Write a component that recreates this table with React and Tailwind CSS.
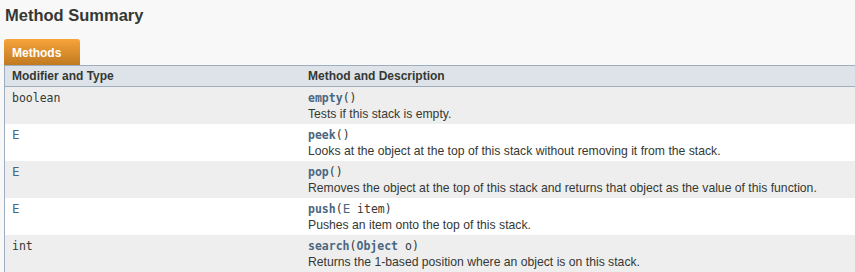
export default function App() {
  const mono = { fontFamily: '"DejaVu Sans Mono", "Liberation Mono", monospace' };
  const rows = [
    { type: "boolean", link: false, name: "empty", args: [], desc: "Tests if this stack is empty.", bg: "bg-[#eeeeee]" },
    { type: "E", link: true, name: "peek", args: [], desc: "Looks at the object at the top of this stack without removing it from the stack.", bg: "bg-white" },
    { type: "E", link: true, name: "pop", args: [], desc: "Removes the object at the top of this stack and returns that object as the value of this function.", bg: "bg-[#eeeeee]" },
    { type: "E", link: true, name: "push", args: "push", desc: "Pushes an item onto the top of this stack.", bg: "bg-white" },
    { type: "int", link: false, name: "search", args: "search", desc: "Returns the 1-based position where an object is on this stack.", bg: "bg-[#eeeeee]" },
  ];
  const renderArgs = (a) => {
    if (a === "push")
      return (
        <>
          (<span className="text-[#4a6782] text-[12.5px]">E</span> item)
        </>
      );
    if (a === "search")
      return (
        <>
          (<span className="text-[#4a6782] font-bold">Object</span> o)
        </>
      );
    return "()";
  };
  return (
    <div className="w-[855px] h-[272px] bg-[#f8f8f8] overflow-hidden text-[#353833]" style={{ fontFamily: '"Liberation Sans", Arial, sans-serif' }}>
      <h3 className="pl-[5px] pt-[4px] text-[16.5px] leading-[22px] font-bold text-[#353833]">Method Summary</h3>
      <div className="pl-[4px] mt-[13px]">
        <div className="w-[76px] h-[26px] rounded-t-[3px] bg-gradient-to-b from-[#f7a43a] to-[#c17a20] text-white font-bold text-[12px] leading-[24px] pt-[2px] pl-[8px]">
          Methods
        </div>
        <div className="border-l border-[#9eadc0]">
          <div className="flex h-[22px] bg-[#dee3e9] border-y border-[#9eadc0] text-[12px] font-bold leading-[20px]">
            <div className="w-[303px] pl-[7px]">Modifier and Type</div>
            <div>Method and Description</div>
          </div>
          {rows.map((r, i) => (
            <div key={i} className={`flex h-[37px] pt-[3px] ${r.bg}`}>
              <div className={`w-[303px] pl-[7px] leading-[16px] ${r.link ? "text-[#4a6782] text-[12.5px]" : "text-[11.5px]"}`} style={mono}>
                {r.type}
              </div>
              <div className="flex flex-col">
                <div className="text-[11.5px] leading-[16px]" style={mono}>
                  <span className="font-bold text-[#4a6782]">{r.name}</span>
                  {renderArgs(r.args)}
                </div>
                <div className="text-[12.2px] leading-[17px] whitespace-nowrap">{r.desc}</div>
              </div>
            </div>
          ))}
        </div>
      </div>
    </div>
  );
}
